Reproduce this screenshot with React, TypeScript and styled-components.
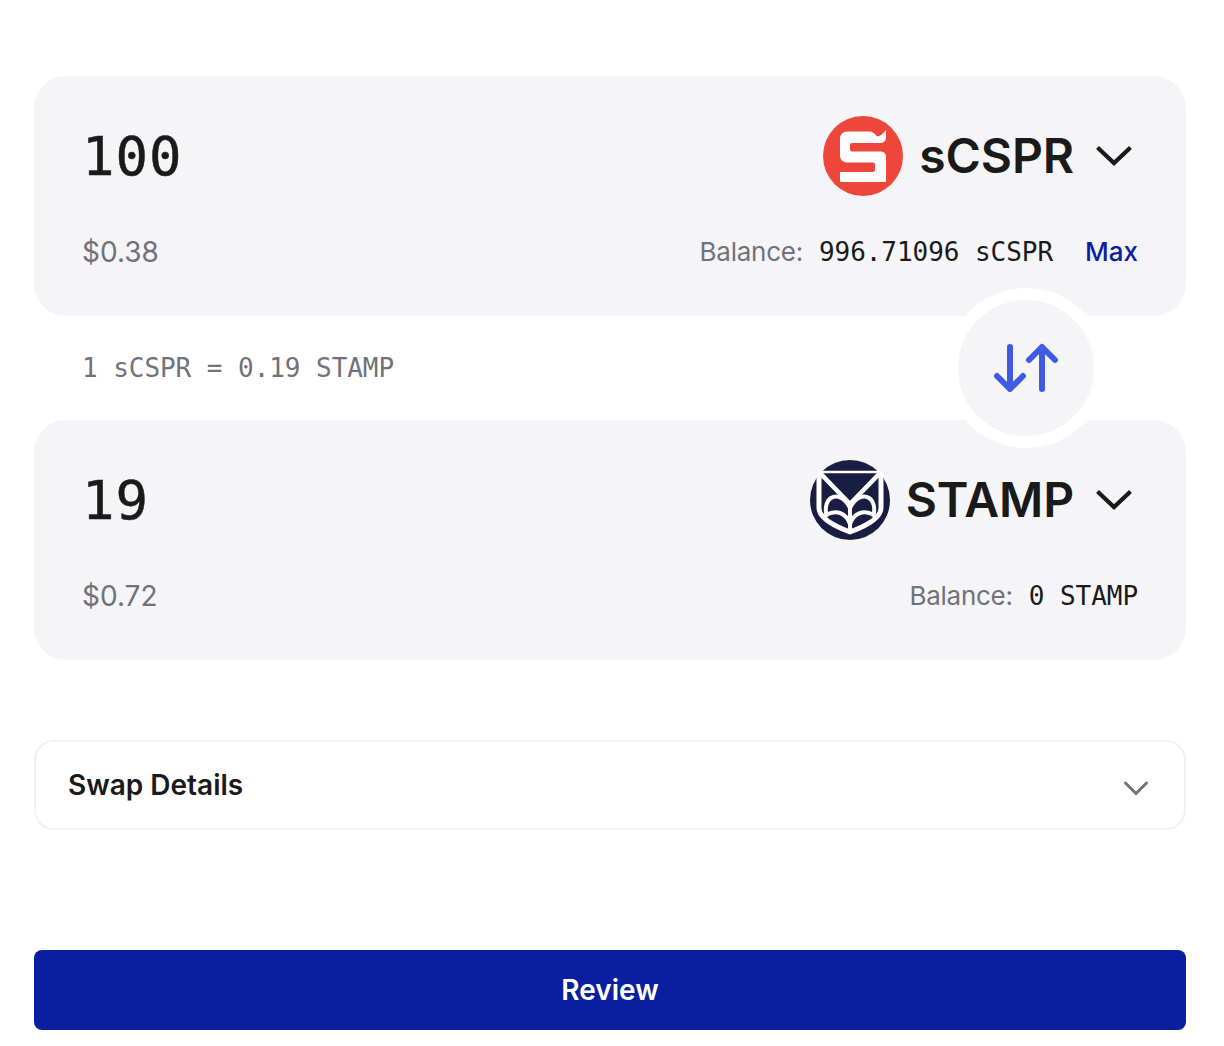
import React from "react";
import styled, { createGlobalStyle } from "styled-components";

const mono = `"DejaVu Sans Mono", "Liberation Mono", monospace`;

const Global = createGlobalStyle`
  html, body { margin: 0; padding: 0; background: #fff; }
  body { font-family: Inter, "Liberation Sans", sans-serif; color: #1a1a1a; }
`;

const Page = styled.main`
  box-sizing: border-box;
  width: 1224px;
  height: 1046px;
  padding: 76px 38px 16px 34px;
  display: flex;
  flex-direction: column;
`;

const Card = styled.section`
  box-sizing: border-box;
  height: 240px;
  padding: 40px 48px 0;
  border-radius: 32px;
  background: #f5f5f7;
  display: flex;
  flex-direction: column;
`;

const TopRow = styled.div`
  display: flex;
  align-items: center;
  justify-content: space-between;
  height: 80px;
`;

const Amount = styled.div`
  margin-top: 2px;
  font-family: ${mono};
  font-size: 54px;
  line-height: 80px;
  letter-spacing: 1px;
  -webkit-text-stroke: 0.5px #1a1a1a;
  color: #1a1a1a;
`;

const TokenPicker = styled.div`
  display: flex;
  align-items: center;
`;

const TokenName = styled.span`
  margin: 0 16px;
  font-size: 48px;
  font-weight: 600;
  letter-spacing: -0.1px;
  line-height: 80px;
`;

const BottomRow = styled.div`
  margin-top: 40px;
  height: 32px;
  display: flex;
  align-items: center;
  justify-content: space-between;
  font-size: 26px;
  line-height: 32px;
`;

const Usd = styled.span`
  font-size: 28px;
  color: #71717a;
`;

const BalanceGroup = styled.div`
  display: flex;
  align-items: center;
`;

const BalanceLabel = styled.span`
  color: #71717a;
  letter-spacing: -0.25px;
  margin-right: 16px;
`;

const BalanceValue = styled.span`
  font-family: ${mono};
  font-size: 26px;
  letter-spacing: -0.05px;
  color: #1a1a1a;
`;

const MaxLink = styled.a`
  margin-left: 32px;
  color: #0a1f9f;
  font-weight: 500;
`;

const RateRow = styled.div`
  height: 104px;
  padding: 0 80px 0 48px;
  display: flex;
  align-items: center;
  justify-content: space-between;
`;

const Rate = styled.span`
  font-family: ${mono};
  font-size: 26px;
  letter-spacing: -0.05px;
  color: #71717a;
`;

const SwapButton = styled.button`
  position: relative;
  z-index: 1;
  box-sizing: content-box;
  flex: none;
  width: 136px;
  height: 136px;
  margin: -28px 0;
  padding: 0;
  border: 12px solid #fff;
  border-radius: 50%;
  background: #f5f5f7;
  display: flex;
  align-items: center;
  justify-content: center;
`;

const Details = styled.section`
  box-sizing: border-box;
  height: 90px;
  margin-top: 80px;
  padding: 0 32px;
  border: 2px solid #f1f1f3;
  border-radius: 20px;
  display: flex;
  align-items: center;
  justify-content: space-between;
`;

const DetailsTitle = styled.h2`
  margin: 0;
  font-size: 28px;
  font-weight: 600;
  letter-spacing: 0;
  color: #1a1a1a;
`;

const ReviewButton = styled.button`
  height: 80px;
  margin-top: 120px;
  border: 0;
  border-radius: 8px;
  background: #0a1f9f;
  color: #fff;
  font-family: Inter, "Liberation Sans", sans-serif;
  font-size: 28px;
  font-weight: 600;
`;

const TokenChevron = () => (
  <svg width="48" height="48" viewBox="0 0 48 48" fill="none" aria-hidden="true">
    <path d="M7.5 15.5 L24 31 L40.5 15.5" stroke="#1a1a1a" strokeWidth="4.2" />
  </svg>
);

const DetailsChevron = () => (
  <svg width="32" height="32" viewBox="0 0 32 32" fill="none" aria-hidden="true">
    <path
      d="M5.5 14 L16 24.5 L26.5 14"
      stroke="#71717a"
      strokeWidth="3"
      strokeLinecap="round"
      strokeLinejoin="round"
    />
  </svg>
);

const ScsprLogo = () => (
  <svg width="80" height="80" viewBox="0 0 80 80" aria-hidden="true">
    <circle cx="40" cy="40" r="40" fill="#ee463b" />
    <path
      fill="#fff"
      d="M24 15.5 H46 C49 15.5 52 17 54 20.5 C57 20.5 60 18 63 14 V22 C63 25 60 27 57 27 H29 C28 27 27 28 27 29 V33 C27 34.5 28 35.5 29 35.5 H57 C61 35.5 63 37.5 63 41.5 V66 H17 V56 H50 C51 56 52 55 52 54 V48.5 C52 47.5 51 46.5 50 46.5 H24 C20 46.5 17 43.5 17 39.5 V22.5 C17 18.5 20 15.5 24 15.5 Z"
    />
  </svg>
);

const StampLogo = () => (
  <svg width="80" height="80" viewBox="0 0 80 80" aria-hidden="true">
    <circle cx="40" cy="40" r="40" fill="#191d42" />
    <g fill="none" stroke="#fff" strokeLinejoin="round">
      <path strokeWidth="2.6" d="M9.5 12 H70.5" />
      <path strokeWidth="5" d="M9 12 V48 C9 58 24 66 40 72 C56 66 71 58 71 48 V12" />
      <path strokeWidth="4.6" d="M9 12 L40 44 L71 12" />
      <path strokeWidth="4" d="M40 48 C35 38 27 34 21 38 C15 42 15 51 17 57" />
      <path strokeWidth="4" d="M40 48 C45 38 53 34 59 38 C65 42 65 51 63 57" />
      <path strokeWidth="4" d="M18 54 C27 50 36 53 40 64" />
      <path strokeWidth="4" d="M62 54 C53 50 44 53 40 64" />
      <path strokeWidth="4" d="M40 44 V71" />
    </g>
  </svg>
);

const SwapIcon = () => (
  <svg width="66" height="50" viewBox="0 0 66 50" fill="none" aria-hidden="true">
    <path
      d="M17 4 V46 M4 33 L17 46 L30 33 M49 46 V4 M36 17 L49 4 L62 17"
      stroke="#3f5be6"
      strokeWidth="6"
      strokeLinecap="round"
      strokeLinejoin="round"
    />
  </svg>
);

export default function App() {
  return (
    <Page>
      <Global />
      <Card>
        <TopRow>
          <Amount>100</Amount>
          <TokenPicker>
            <ScsprLogo />
            <TokenName>sCSPR</TokenName>
            <TokenChevron />
          </TokenPicker>
        </TopRow>
        <BottomRow>
          <Usd>$0.38</Usd>
          <BalanceGroup>
            <BalanceLabel>Balance:</BalanceLabel>
            <BalanceValue>996.71096 sCSPR</BalanceValue>
            <MaxLink>Max</MaxLink>
          </BalanceGroup>
        </BottomRow>
      </Card>
      <RateRow>
        <Rate>1 sCSPR = 0.19 STAMP</Rate>
        <SwapButton aria-label="Swap">
          <SwapIcon />
        </SwapButton>
      </RateRow>
      <Card>
        <TopRow>
          <Amount>19</Amount>
          <TokenPicker>
            <StampLogo />
            <TokenName>STAMP</TokenName>
            <TokenChevron />
          </TokenPicker>
        </TopRow>
        <BottomRow>
          <Usd>$0.72</Usd>
          <BalanceGroup>
            <BalanceLabel>Balance:</BalanceLabel>
            <BalanceValue>0 STAMP</BalanceValue>
          </BalanceGroup>
        </BottomRow>
      </Card>
      <Details>
        <DetailsTitle>Swap Details</DetailsTitle>
        <DetailsChevron />
      </Details>
      <ReviewButton>Review</ReviewButton>
    </Page>
  );
}
